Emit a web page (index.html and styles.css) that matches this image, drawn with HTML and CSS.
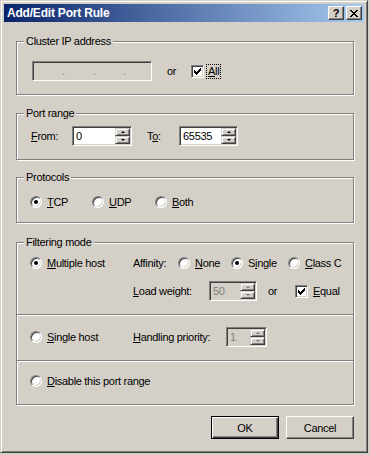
FILE: index.html
```html
<!DOCTYPE html>
<html>
<head>
<meta charset="utf-8">
<title>Add/Edit Port Rule</title>
<link rel="stylesheet" href="styles.css">
</head>
<body>
<div class="window">
  <div class="titlebar">
    <span class="title">Add/Edit Port Rule</span>
    <div class="caption-btns">
      <span class="cap-btn help">?</span>
      <span class="cap-btn close">
        <svg width="8" height="7" viewBox="0 0 8 7" shape-rendering="crispEdges"><path fill="#000" d="M0 0h2v1h-2zM6 0h2v1h-2zM1 1h2v1h-2zM5 1h2v1h-2zM2 2h4v1h-4zM3 3h2v1h-2zM2 4h4v1h-4zM1 5h2v1h-2zM5 5h2v1h-2zM0 6h2v1h-2zM6 6h2v1h-2z"/></svg>
      </span>
    </div>
  </div>

  <div class="content">
    <fieldset class="group g-cluster">
      <legend>Cluster IP address</legend>
      <div class="row r-cluster">
        <div class="field disabled ipbox">
          <span class="seg s1"></span><span class="dot">.</span>
          <span class="seg s2"></span><span class="dot">.</span>
          <span class="seg s3"></span><span class="dot">.</span>
        </div>
        <span class="or-a">or</span>
        <span class="check"><svg width="7" height="7" viewBox="0 0 7 7" shape-rendering="crispEdges"><path fill="#000" d="M6 0h1v1h-1zM5 1h2v1h-2zM0 2h1v1h-1zM4 2h3v1h-3zM0 3h2v1h-2zM3 3h3v1h-3zM0 4h5v1h-5zM1 5h3v1h-3zM2 6h1v1h-1z"/></svg></span>
        <span class="focus"><u>A</u>ll</span>
      </div>
    </fieldset>

    <fieldset class="group g-port">
      <legend>Port range</legend>
      <div class="row r-port">
        <span class="lbl-from"><u>F</u>rom:</span>
        <div class="field spinfield w60">
          <span class="val">0</span>
          <div class="spin"><span class="spin-btn up"></span><span class="spin-btn down"></span></div>
        </div>
        <span class="lbl-to">T<u>o</u>:</span>
        <div class="field spinfield w59">
          <span class="val">65535</span>
          <div class="spin"><span class="spin-btn up"></span><span class="spin-btn down"></span></div>
        </div>
      </div>
    </fieldset>

    <fieldset class="group g-proto">
      <legend>Protocols</legend>
      <div class="row r-proto">
        <span class="opt w62"><span class="radio on"></span><span><u>T</u>CP</span></span>
        <span class="opt w63"><span class="radio"></span><span><u>U</u>DP</span></span>
        <span class="opt"><span class="radio"></span><span><u>B</u>oth</span></span>
      </div>
    </fieldset>

    <fieldset class="group g-filter">
      <legend>Filtering mode</legend>
      <div class="row r-multi">
        <span class="opt w103"><span class="radio on"></span><span><u>M</u>ultiple host</span></span>
        <span class="w45">Affinity:</span>
        <span class="opt w53"><span class="radio"></span><span><u>N</u>one</span></span>
        <span class="opt w57"><span class="radio on"></span><span>S<u>i</u>ngle</span></span>
        <span class="opt"><span class="radio"></span><span><u>C</u>lass C</span></span>
      </div>
      <div class="row r-load">
        <span class="lbl-load"><u>L</u>oad weight:</span>
        <div class="field spinfield disabled w48">
          <span class="val">50</span>
          <div class="spin"><span class="spin-btn up"></span><span class="spin-btn down"></span></div>
        </div>
        <span class="or-b">or</span>
        <span class="check"><svg width="7" height="7" viewBox="0 0 7 7" shape-rendering="crispEdges"><path fill="#000" d="M6 0h1v1h-1zM5 1h2v1h-2zM0 2h1v1h-1zM4 2h3v1h-3zM0 3h2v1h-2zM3 3h3v1h-3zM0 4h5v1h-5zM1 5h3v1h-3zM2 6h1v1h-1z"/></svg></span>
        <span class="lbl-equal"><u>E</u>qual</span>
      </div>
      <div class="sep"></div>
      <div class="row r-single">
        <span class="opt w103"><span class="radio"></span><span><u>S</u>ingle host</span></span>
        <span class="w93"><u>H</u>andling priority:</span>
        <div class="field spinfield disabled w41">
          <span class="val">1</span>
          <div class="spin"><span class="spin-btn up"></span><span class="spin-btn down"></span></div>
        </div>
      </div>
      <div class="sep"></div>
      <div class="row r-disable">
        <span class="opt"><span class="radio"></span><span><u>D</u>isable this port range</span></span>
      </div>
    </fieldset>

    <div class="buttons">
      <button class="btn default">OK</button>
      <button class="btn">Cancel</button>
    </div>
  </div>
</div>
</body>
</html>
```

FILE: styles.css
```css
* { box-sizing: border-box; }

body {
  margin: 0;
  background: #d4d0c8;
  font-family: "Liberation Sans", Arial, sans-serif;
  font-size: 11px;
  letter-spacing: -0.3px;
  color: #000;
}

.window {
  width: 368px;
  height: 453px;
  background: #d4d0c8;
  border: 1px solid;
  border-color: #d4d0c8 #404040 #404040 #d4d0c8;
  box-shadow: inset 1px 1px 0 #fff, inset -1px -1px 0 #808080;
  padding: 3px;
  display: flex;
  flex-direction: column;
}

.titlebar {
  height: 18px;
  flex: none;
  background: linear-gradient(to right, #0a246a, #a6caf0);
  display: flex;
  align-items: center;
  justify-content: space-between;
  padding: 0 2px 0 3px;
}

.title {
  color: #fff;
  font-weight: bold;
  font-size: 12px;
  letter-spacing: -0.2px;
}

.caption-btns { display: flex; }

.cap-btn {
  width: 16px;
  height: 14px;
  background: #d4d0c8;
  border: 1px solid;
  border-color: #fff #404040 #404040 #fff;
  box-shadow: inset -1px -1px 0 #808080;
  display: flex;
  align-items: center;
  justify-content: center;
}

.help {
  margin-right: 2px;
  font-weight: bold;
  font-size: 11px;
  letter-spacing: 0;
  line-height: 12px;
}

.content {
  flex: 1;
  padding: 13px 10px 0 12px;
  display: flex;
  flex-direction: column;
}

.group {
  margin: 0;
  padding: 0;
  min-width: 0;
  border: 1px solid #808080;
  box-shadow: inset 1px 1px 0 #fff, 1px 1px 0 #fff;
}

.group legend {
  margin-left: 7px;
  padding: 0 2px;
  line-height: 13px;
  background: #d4d0c8;
}

.row {
  display: flex;
  align-items: center;
}

/* group spacing */
.g-port { margin-top: 12px; }
.g-proto { margin-top: 11px; }
.g-filter { margin-top: 13px; padding-bottom: 15px; }

.r-cluster { height: 20px; margin: 13px 0 13px; padding-left: 15px; }
.r-port { height: 20px; margin: 6px 0 13px; padding-left: 14px; }
.r-proto { height: 16px; margin: 10px 0 12px; padding-left: 13px; }
.r-multi { height: 16px; margin-top: 6px; padding-left: 13px; }
.r-load { height: 20px; margin-top: 10px; padding-left: 116px; }
.r-single { height: 20px; margin-top: 11px; padding-left: 13px; }
.r-disable { height: 16px; margin-top: 11px; padding-left: 13px; }

.sep {
  margin-top: 13px;
  border-top: 1px solid #808080;
  border-bottom: 1px solid #fff;
}

/* widths */
.w41 { width: 41px; }
.w45 { width: 45px; }
.w48 { width: 48px; }
.w53 { width: 53px; }
.w57 { width: 57px; }
.w59 { width: 59px; }
.w60 { width: 60px; }
.w62 { width: 62px; }
.w63 { width: 63px; }
.w93 { width: 93px; }
.w103 { width: 103px; }

.lbl-from { width: 41px; }
.lbl-to { width: 32px; margin-left: 15px; }
.lbl-load { width: 76px; }
.or-a { width: 24px; margin-left: 15px; }
.or-b { width: 27px; margin-left: 11px; }
.lbl-equal { margin-left: 5px; }

/* sunken edit field */
.field {
  height: 20px;
  flex: none;
  border: 1px solid;
  border-color: #808080 #fff #fff #808080;
  box-shadow: inset 1px 1px 0 #404040, inset -1px -1px 0 #d4d0c8;
  background: #fff;
  display: flex;
  align-items: center;
  padding: 1px 1px 1px 3px;
}

.field.disabled {
  background: #d4d0c8;
  color: #808080;
}

.ipbox {
  width: 120px;
  padding-left: 0;
}

.seg { display: block; }
.s1 { width: 29px; }
.s2 { width: 28px; }
.s3 { width: 27px; }
.dot {
  width: 3px;
  color: #808080;
  letter-spacing: 0;
}

.spinfield .val { flex: 1; }

.spin {
  width: 15px;
  align-self: stretch;
  display: flex;
  flex-direction: column;
}

.spin-btn {
  flex: 1;
  background: #d4d0c8;
  border: 1px solid;
  border-color: #d4d0c8 #404040 #404040 #d4d0c8;
  box-shadow: inset 1px 1px 0 #fff, inset -1px -1px 0 #808080;
  display: flex;
  align-items: center;
  justify-content: center;
}

.spin-btn::after {
  content: "";
  width: 0;
  height: 0;
  border-left: 2px solid transparent;
  border-right: 2px solid transparent;
}

.spin-btn.up::after { border-bottom: 2px solid #000; }
.spin-btn.down::after { border-top: 2px solid #000; }

.disabled .spin-btn.up::after { border-bottom-color: #808080; }
.disabled .spin-btn.down::after { border-top-color: #808080; }

/* checkbox */
.check {
  width: 13px;
  height: 13px;
  flex: none;
  border: 1px solid;
  border-color: #808080 #fff #fff #808080;
  box-shadow: inset 1px 1px 0 #404040, inset -1px -1px 0 #d4d0c8;
  background: #fff;
  display: flex;
  align-items: center;
  justify-content: center;
}

.check svg { display: block; }

.focus {
  margin-left: 3px;
  padding: 0 1px;
  line-height: 13px;
  outline: 1px dotted #000;
}

/* radio */
.opt {
  display: flex;
  align-items: center;
  gap: 5px;
  flex: none;
}

.radio {
  width: 12px;
  height: 12px;
  flex: none;
  border-radius: 50%;
  border: 1px solid;
  border-color: #808080 #fff #fff #808080;
  box-shadow: inset 1px 1px 0 #404040, inset -1px -1px 0 #d4d0c8;
  background: #fff;
  display: flex;
  align-items: center;
  justify-content: center;
}

.radio.on::after {
  content: "";
  width: 4px;
  height: 4px;
  border-radius: 50%;
  background: #000;
}

/* buttons */
.buttons {
  margin-top: 11px;
  display: flex;
  justify-content: flex-end;
  gap: 7px;
}

.btn {
  width: 68px;
  height: 23px;
  margin: 0;
  padding: 0;
  font: inherit;
  letter-spacing: -0.3px;
  color: #000;
  background: #d4d0c8;
  border: 1px solid;
  border-color: #fff #404040 #404040 #fff;
  box-shadow: inset -1px -1px 0 #808080;
  display: flex;
  align-items: center;
  justify-content: center;
}

.btn.default {
  border-color: #000;
  box-shadow: inset 1px 1px 0 #fff, inset -1px -1px 0 #404040, inset -2px -2px 0 #808080;
}
```
